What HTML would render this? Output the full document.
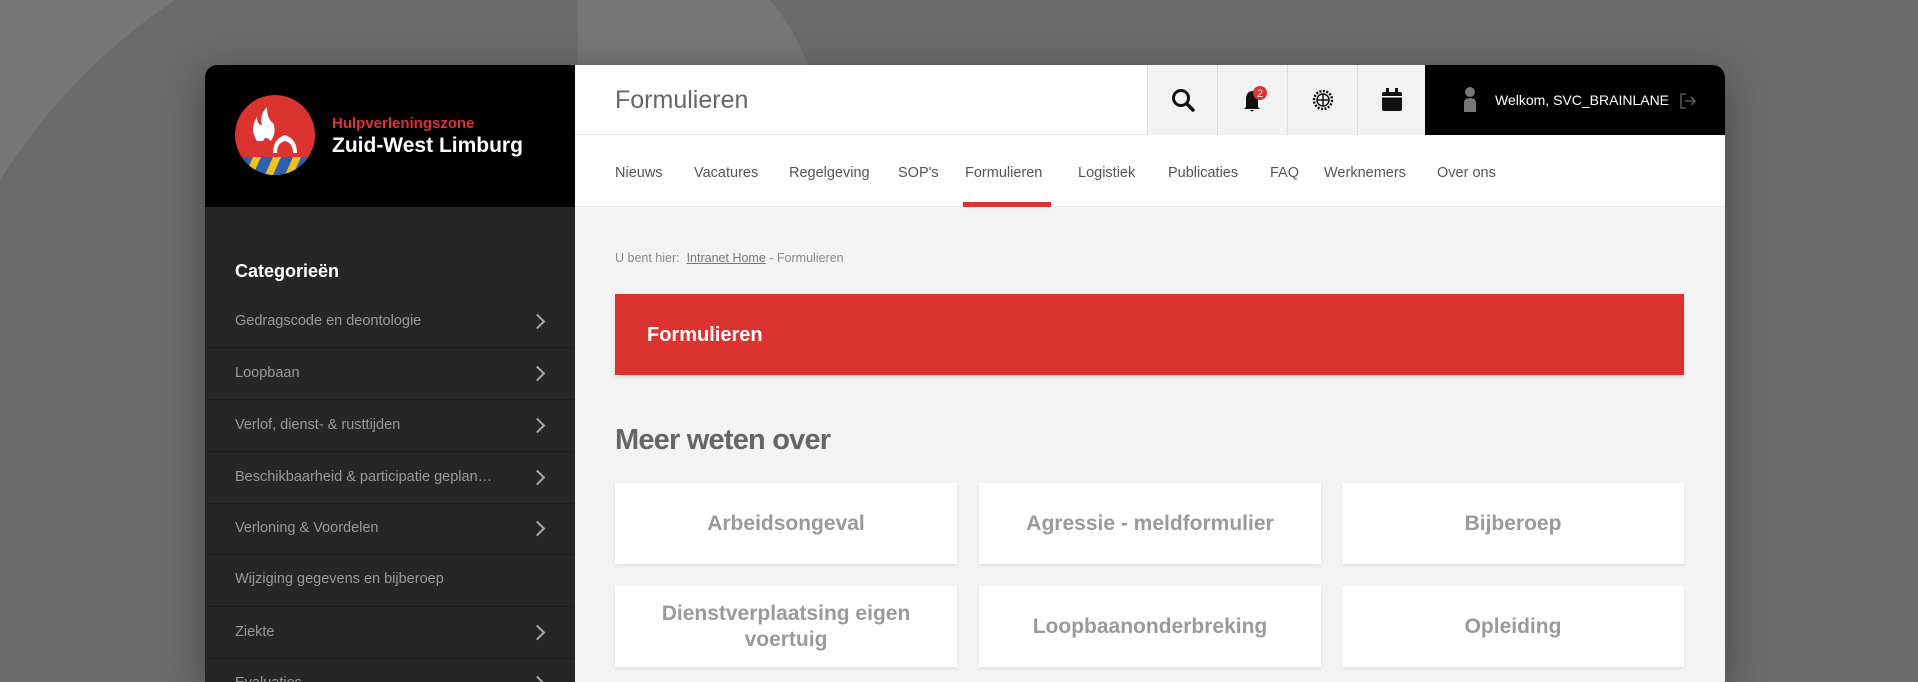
<!DOCTYPE html>
<html><head><meta charset="utf-8"><style>
*{margin:0;padding:0;box-sizing:border-box}
html,body{width:1918px;height:682px;overflow:hidden}
body{background:#6b6b6b;font-family:"Liberation Sans",sans-serif;position:relative}
.a{position:absolute}
#card{left:205px;top:65px;width:1520px;height:617px;border-radius:12px 12px 0 0;overflow:hidden;background:#f3f3f3;box-shadow:0 10px 40px rgba(0,0,0,.35)}
.nav{font-size:14.5px;color:#555;top:100px}
.side{color:#9a9a9a;font-size:14.5px;left:30px}
.sep{left:0;width:370px;height:1px;background:#1e1e1e}
.chev{left:327px;width:11px;height:11px;border-right:2px solid #aaa;border-top:2px solid #aaa;transform:rotate(45deg)}
.c{background:#fff;width:342px;height:81px;display:flex;align-items:center;justify-content:center;text-align:center;color:#9a9a9a;font-size:21px;font-weight:bold;box-shadow:0 2px 3px rgba(0,0,0,.08);line-height:26px}
.ic{top:0;width:70px;height:70px;background:#f2f2f2;border-left:1px solid #ddd;display:flex;align-items:center;justify-content:center}
</style></head><body>
<svg class="a" style="left:0;top:0" width="1918" height="682">
<path d="M0 0 L175 0 Q70 70 0 180 Z" fill="#777"/>
<path d="M578 0 L770 0 Q795 30 808 65 L578 65 Z" fill="#767676"/>
</svg>
<div id="card" class="a">
 <div class="a" style="left:0;top:0;width:370px;height:142px;background:#000"></div>
 <svg class="a" style="left:30px;top:30px" width="80" height="80" viewBox="0 0 80 80">
  <defs><clipPath id="cp"><circle cx="40" cy="40" r="40"/></clipPath></defs>
  <circle cx="40" cy="40" r="40" fill="#db3330"/>
  <g clip-path="url(#cp)">
   <rect x="0" y="62" width="80" height="18" fill="#2f5fb0"/>
   <path d="M10 80 L18 62 L26 62 L18 80Z M30 80 L38 62 L46 62 L38 80Z M50 80 L58 62 L66 62 L58 80Z" fill="#f1c21b"/>
  </g>
  <path d="M22 46 Q14 34 22 22 Q22 30 27 30 Q24 20 32 12 Q32 24 38 28 Q42 36 36 46 Q30 40 28 46Z" fill="#fff"/>
  <path d="M38 58 Q38 44 50 40 Q62 44 62 58 L58 58 Q58 48 50 46 Q42 48 42 58Z" fill="#fff"/>
 </svg>
 <div class="a" style="left:127px;top:50px;color:#e03232;font-size:15px;font-weight:bold">Hulpverleningszone</div>
 <div class="a" style="left:127px;top:69px;color:#fff;font-size:21px;font-weight:bold">Zuid-West Limburg</div>
 <div class="a" style="left:0;top:142px;width:370px;height:600px;background:#262626"></div>
 <div class="a" style="left:30px;top:196px;color:#fff;font-size:18px;font-weight:bold">Categorieën</div>
 <div class="a side" style="top:248px">Gedragscode en deontologie</div><div class="a chev" style="top:251px"></div><div class="a sep" style="top:282px"></div>
 <div class="a side" style="top:300px">Loopbaan</div><div class="a chev" style="top:303px"></div><div class="a sep" style="top:334px"></div>
 <div class="a side" style="top:352px">Verlof, dienst- &amp; rusttijden</div><div class="a chev" style="top:355px"></div><div class="a sep" style="top:386px"></div>
 <div class="a side" style="top:404px">Beschikbaarheid &amp; participatie geplan…</div><div class="a chev" style="top:407px"></div><div class="a sep" style="top:438px"></div>
 <div class="a side" style="top:455px">Verloning &amp; Voordelen</div><div class="a chev" style="top:458px"></div><div class="a sep" style="top:489px"></div>
 <div class="a side" style="top:506px">Wijziging gegevens en bijberoep</div><div class="a sep" style="top:541px"></div>
 <div class="a side" style="top:559px">Ziekte</div><div class="a chev" style="top:562px"></div><div class="a sep" style="top:593px"></div>
 <div class="a side" style="top:610px">Evaluaties</div><div class="a chev" style="top:613px"></div>
 <!-- top bar -->
 <div class="a" style="left:370px;top:0;width:1150px;height:70px;background:#fff;border-bottom:1px solid #e5e5e5"></div>
 <div class="a" style="left:410px;top:21px;font-size:25px;color:#666">Formulieren</div>
 <div class="a ic" style="left:942px"><svg width="26" height="26" viewBox="0 0 26 26"><circle cx="11" cy="11" r="7.5" fill="none" stroke="#111" stroke-width="3"/><path d="M16.5 16.5 L23 23" stroke="#111" stroke-width="3.5" stroke-linecap="round"/></svg></div>
 <div class="a ic" style="left:1012px"><svg width="30" height="30" viewBox="0 0 30 30"><path d="M8 22 L8 14 Q8 7 14 6 Q20 7 20 14 L20 22 L22 24 L6 24Z M12 25 Q14 28 16 25Z" fill="#111"/><circle cx="22" cy="8" r="7" fill="#e03232"/><text x="22" y="12" font-size="11" fill="#fff" text-anchor="middle" font-family="Liberation Sans">2</text></svg></div>
 <div class="a ic" style="left:1082px"><svg width="26" height="26" viewBox="0 0 26 26"><circle cx="13" cy="13" r="9" fill="none" stroke="#111" stroke-width="2.5" stroke-dasharray="2 1.5"/><circle cx="13" cy="13" r="6" fill="none" stroke="#111" stroke-width="1.5"/><path d="M7 13H19M13 7V19" stroke="#111" stroke-width="1.5"/></svg></div>
 <div class="a ic" style="left:1152px;width:69px"><svg width="24" height="26" viewBox="0 0 24 26"><rect x="2" y="5" width="20" height="19" rx="2" fill="#111"/><rect x="6" y="1" width="3" height="6" fill="#111"/><rect x="15" y="1" width="3" height="6" fill="#111"/><rect x="2" y="9" width="20" height="1.5" fill="#fff"/></svg></div>
 <div class="a" style="left:1220px;top:0;width:300px;height:70px;background:#000"></div>
 <svg class="a" style="left:1257px;top:21px" width="16" height="28" viewBox="0 0 16 28"><circle cx="8" cy="6" r="5" fill="#777"/><path d="M2 26 L2 17 Q2 12 8 12 Q14 12 14 17 L14 26Z" fill="#777"/></svg>
 <div class="a" style="left:1290px;top:27px;color:#fff;font-size:14px">Welkom, SVC_BRAINLANE</div>
 <svg class="a" style="left:1474px;top:27px" width="18" height="18" viewBox="0 0 18 18"><path d="M7 2H2V16H7" fill="none" stroke="#666" stroke-width="1.3"/><path d="M6 9H16M12 5L16 9L12 13" fill="none" stroke="#666" stroke-width="1.3"/></svg>
 <!-- nav -->
 <div class="a" style="left:370px;top:70px;width:1150px;height:72px;background:#fff;border-bottom:1px solid #e8e8e8"></div>
 <div class="a nav" style="left:410px">Nieuws</div>
 <div class="a nav" style="left:489px">Vacatures</div>
 <div class="a nav" style="left:584px">Regelgeving</div>
 <div class="a nav" style="left:693px">SOP's</div>
 <div class="a nav" style="left:760px">Formulieren</div>
 <div class="a nav" style="left:873px">Logistiek</div>
 <div class="a nav" style="left:963px">Publicaties</div>
 <div class="a nav" style="left:1065px">FAQ</div>
 <div class="a nav" style="left:1119px">Werknemers</div>
 <div class="a nav" style="left:1232px">Over ons</div>
 <div class="a" style="left:758px;top:137px;width:88px;height:5px;background:#db3330"></div>
 <!-- content -->
 <div class="a" style="left:410px;top:186px;font-size:12.5px;color:#888">U bent hier: &nbsp;<span style="text-decoration:underline;color:#777">Intranet Home</span> - Formulieren</div>
 <div class="a" style="left:410px;top:229px;width:1069px;height:81px;background:#db3330;box-shadow:0 2px 4px rgba(0,0,0,.12)"></div>
 <div class="a" style="left:442px;top:259px;color:#fff;font-size:20px;font-weight:bold">Formulieren</div>
 <div class="a" style="left:410px;top:359px;color:#666;font-size:29px;font-weight:bold;letter-spacing:-.8px">Meer weten over</div>
 <div class="a c" style="left:410px;top:418px">Arbeidsongeval</div>
 <div class="a c" style="left:774px;top:418px">Agressie - meldformulier</div>
 <div class="a c" style="left:1137px;top:418px">Bijberoep</div>
 <div class="a c" style="left:410px;top:521px">Dienstverplaatsing eigen<br>voertuig</div>
 <div class="a c" style="left:774px;top:521px">Loopbaanonderbreking</div>
 <div class="a c" style="left:1137px;top:521px">Opleiding</div>
</div>
</body></html>
